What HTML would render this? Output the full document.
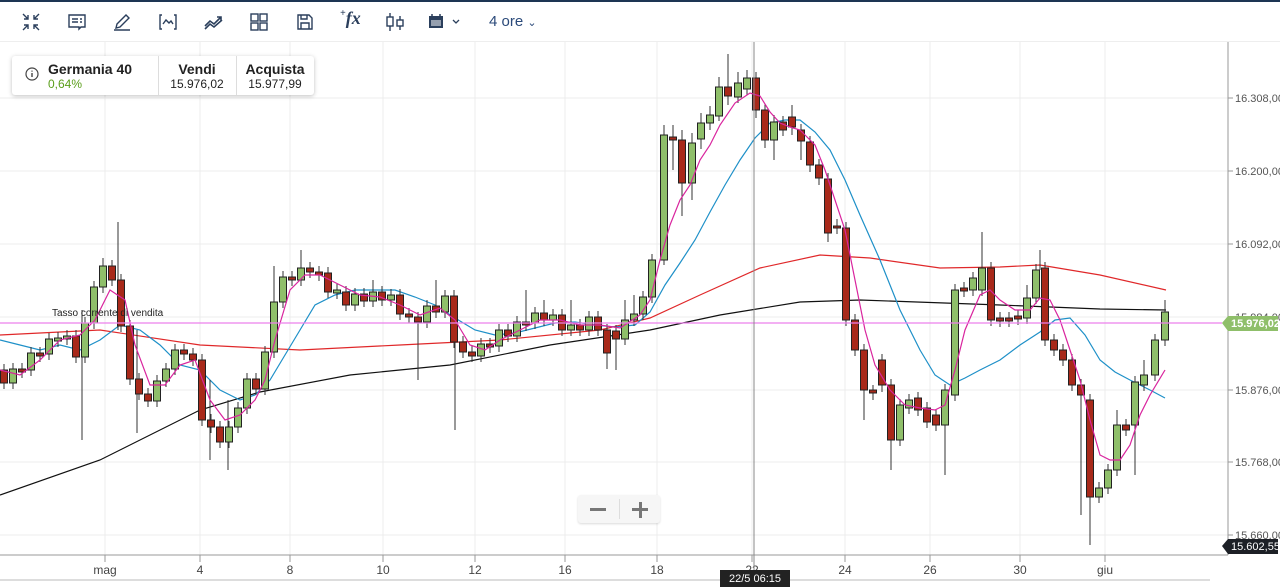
<!DOCTYPE html>
<html><head><meta charset="utf-8">
<style>
*{margin:0;padding:0;box-sizing:border-box}
body{width:1280px;height:587px;overflow:hidden;background:#fff;font-family:"Liberation Sans",sans-serif;position:relative}
#top{position:absolute;left:0;top:0;width:1280px;height:2px;background:#1d3553}
#tb{position:absolute;left:0;top:2px;width:1280px;height:40px;background:#fff;border-bottom:1px solid #eee}
.ic{position:absolute;top:10px}
#info{position:absolute;left:12px;top:56px;width:302px;height:39px;background:#fff;box-shadow:0 1px 4px rgba(0,0,0,.25);border-radius:3px;font-size:12px;color:#222}
#chart{position:absolute;left:0;top:0}
.g{stroke:#ececec;stroke-width:1}
.yl{font-size:11px;fill:#555}
.xl{font-size:12px;fill:#444;text-anchor:middle}
</style></head><body>
<svg id="chart" width="1280" height="587">
<g class="g">
<line x1="0" y1="98" x2="1228" y2="98"/><line x1="0" y1="171" x2="1228" y2="171"/><line x1="0" y1="244" x2="1228" y2="244"/><line x1="0" y1="317" x2="1228" y2="317"/><line x1="0" y1="390" x2="1228" y2="390"/><line x1="0" y1="462" x2="1228" y2="462"/><line x1="0" y1="535" x2="1228" y2="535"/>
<line x1="105" y1="42" x2="105" y2="555"/><line x1="200" y1="42" x2="200" y2="555"/><line x1="290" y1="42" x2="290" y2="555"/><line x1="383" y1="42" x2="383" y2="555"/><line x1="475" y1="42" x2="475" y2="555"/><line x1="565" y1="42" x2="565" y2="555"/><line x1="657" y1="42" x2="657" y2="555"/><line x1="752" y1="42" x2="752" y2="555"/><line x1="845" y1="42" x2="845" y2="555"/><line x1="930" y1="42" x2="930" y2="555"/><line x1="1020" y1="42" x2="1020" y2="555"/><line x1="1105" y1="42" x2="1105" y2="555"/>
</g>
<path d="M1228 42V555M0 555H1228M105 555v7M200 555v7M290 555v7M383 555v7M475 555v7M565 555v7M657 555v7M752 555v7M845 555v7M930 555v7M1020 555v7M1105 555v7M1228 98h5M1228 171h5M1228 244h5M1228 317h5M1228 390h5M1228 462h5M1228 535h5" stroke="#999" fill="none"/>
<line x1="0" y1="580" x2="1210" y2="580" stroke="#bbb"/>
<text class="xl" x="105" y="574">mag</text><text class="xl" x="200" y="574">4</text><text class="xl" x="290" y="574">8</text><text class="xl" x="383" y="574">10</text><text class="xl" x="475" y="574">12</text><text class="xl" x="565" y="574">16</text><text class="xl" x="657" y="574">18</text><text class="xl" x="752" y="574">22</text><text class="xl" x="845" y="574">24</text><text class="xl" x="930" y="574">26</text><text class="xl" x="1020" y="574">30</text><text class="xl" x="1105" y="574">giu</text>
<text class="yl" x="1235" y="102">16.308,00</text><text class="yl" x="1235" y="175">16.200,00</text><text class="yl" x="1235" y="248">16.092,00</text><text class="yl" x="1235" y="321">15.984,00</text><text class="yl" x="1235" y="394">15.876,00</text><text class="yl" x="1235" y="466">15.768,00</text><text class="yl" x="1235" y="539">15.660,00</text>

<polyline fill="none" stroke="#e0282a" stroke-width="1.2" points="0,335 100,330 200,345 300,350 400,345 500,340 600,330 650,318 700,295 760,268 820,255 870,258 940,268 1000,267 1040,265 1100,275 1166,290"/>
<polyline fill="none" stroke="#111" stroke-width="1.2" points="0,495 100,460 200,410 260,392 350,375 450,365 550,345 650,330 720,315 800,302 860,300 1000,305 1100,309 1166,310"/>
<polyline fill="none" stroke="#1e90c8" stroke-width="1.2" points="0,340 20,345 40,350 60,345 80,350 100,340 120,325 140,330 160,345 180,365 200,370 220,390 240,400 255,395 270,380 285,355 300,330 315,305 335,295 355,290 375,290 395,290 415,297 435,305 455,318 475,330 495,335 515,333 535,328 555,323 575,322 595,325 615,327 635,325 650,312 665,285 680,263 695,240 710,212 725,185 740,160 755,138 770,123 785,120 800,120 815,132 830,150 845,180 860,215 880,260 900,310 920,350 935,375 950,385 965,378 980,370 1000,360 1020,345 1040,332 1055,320 1070,318 1085,335 1100,360 1115,372 1130,380 1150,390 1165,398"/>

<path stroke="#333" stroke-width="1" fill="none" d="M4 364V389M13 363V389M22 363V378M31 347V376M40 347V362M49 333V360M58 332V347M67 330V345M76 330V363M82 310V440M85 317V363M94 281V329M103 258V293M112 260V286M118 222V330M121 274V332M130 320V385M137 330V433M139 373V400M148 388V407M157 375V407M166 363V387M175 344V375M184 344V360M193 348V366M202 354V426M210 380V460M211 414V433M220 421V448M228 400V470M229 421V448M238 402V433M247 373V414M256 373V395M265 346V395M274 266V358M283 271V308M292 271V286M301 250V286M310 262V278M319 266V281M328 267V298M337 284V299M346 286V311M355 288V311M364 288V307M373 280V307M382 286V306M391 289V306M400 289V320M409 308V323M418 312V380M427 300V328M436 280V318M445 290V318M454 290V348M455 340V430M463 336V358M472 346V362M481 338V362M490 338V353M499 324V352M508 324V342M517 316V342M526 290V331M535 307V329M544 300V326M553 309V326M562 309V336M571 300V336M580 319V336M589 311V336M598 311V336M607 324V369M616 325V370M625 300V345M634 295V326M643 291V320M652 254V303M664 125V265M673 125V170M682 130V216M692 133V200M701 113V149M710 106V130M719 77V121M728 54V105M738 72V103M747 70V95M756 72V118M765 104V148M774 115V160M783 116V136M792 105V135M801 124V160M810 136V172M819 159V185M828 173V242M837 219V234M846 222V326M855 314V356M864 344V420M873 385V400M882 354V392M891 379V470M900 399V446M909 394V414M918 392V416M927 402V428M936 409V431M945 384V475M955 284V401M964 282V297M973 272V296M982 232V296M991 262V326M1000 312V327M1009 312V327M1018 310V325M1027 285V324M1036 264V304M1040 250V270M1045 262V346M1054 334V356M1063 344V366M1072 354V391M1081 379V515M1090 394V545M1099 482V503M1108 464V494M1117 410V476M1126 419V436M1135 376V475M1144 360V391M1155 334V381M1165 300V346"/>

<path fill="#a8291a" stroke="#222" stroke-width="1" d="M0.5 370h7V383h-7zM18.5 369h7V372h-7zM36.5 353h7V356h-7zM72.5 336h7V357h-7zM108.5 266h7V280h-7zM117.5 280h7V326h-7zM126.5 326h7V379h-7zM135.5 379h7V394h-7zM144.5 394h7V401h-7zM180.5 350h7V354h-7zM189.5 354h7V360h-7zM198.5 360h7V420h-7zM207.5 420h7V427h-7zM216.5 427h7V442h-7zM252.5 379h7V389h-7zM288.5 277h7V280h-7zM306.5 268h7V272h-7zM315.5 272h7V275h-7zM324.5 273h7V292h-7zM342.5 292h7V305h-7zM360.5 294h7V301h-7zM378.5 292h7V300h-7zM396.5 295h7V314h-7zM405.5 314h7V317h-7zM414.5 317h7V322h-7zM432.5 306h7V312h-7zM450.5 296h7V342h-7zM459.5 342h7V352h-7zM468.5 352h7V356h-7zM486.5 344h7V347h-7zM504.5 330h7V336h-7zM522.5 322h7V325h-7zM540.5 313h7V320h-7zM558.5 315h7V330h-7zM576.5 325h7V330h-7zM594.5 317h7V330h-7zM603.5 330h7V353h-7zM612.5 331h7V339h-7zM669.5 137h7V140h-7zM678.5 140h7V183h-7zM724.5 87h7V96h-7zM752.5 78h7V110h-7zM761.5 110h7V140h-7zM779.5 122h7V130h-7zM788.5 117h7V127h-7zM797.5 130h7V141h-7zM806.5 142h7V165h-7zM815.5 165h7V178h-7zM824.5 179h7V233h-7zM833.5 226h7V228h-7zM842.5 228h7V320h-7zM851.5 320h7V350h-7zM860.5 350h7V390h-7zM869.5 390h7V393h-7zM878.5 360h7V385h-7zM887.5 385h7V440h-7zM914.5 398h7V410h-7zM923.5 408h7V422h-7zM932.5 415h7V425h-7zM960.5 288h7V291h-7zM987.5 268h7V320h-7zM996.5 318h7V321h-7zM1005.5 318h7V321h-7zM1014.5 316h7V319h-7zM1041.5 268h7V340h-7zM1050.5 340h7V350h-7zM1059.5 350h7V360h-7zM1068.5 360h7V385h-7zM1077.5 385h7V395h-7zM1086.5 400h7V497h-7zM1122.5 425h7V430h-7z"/>

<path fill="#8fbf6a" stroke="#222" stroke-width="1" d="M9.5 369h7V383h-7zM27.5 353h7V370h-7zM45.5 339h7V354h-7zM54.5 338h7V341h-7zM63.5 336h7V339h-7zM81.5 323h7V357h-7zM90.5 287h7V323h-7zM99.5 266h7V287h-7zM153.5 381h7V401h-7zM162.5 369h7V381h-7zM171.5 350h7V369h-7zM225.5 427h7V442h-7zM234.5 408h7V427h-7zM243.5 379h7V408h-7zM261.5 352h7V389h-7zM270.5 302h7V352h-7zM279.5 277h7V302h-7zM297.5 268h7V280h-7zM333.5 290h7V293h-7zM351.5 294h7V305h-7zM369.5 292h7V301h-7zM387.5 295h7V300h-7zM423.5 306h7V322h-7zM441.5 296h7V312h-7zM477.5 344h7V356h-7zM495.5 330h7V346h-7zM513.5 322h7V336h-7zM531.5 313h7V323h-7zM549.5 315h7V320h-7zM567.5 325h7V330h-7zM585.5 317h7V330h-7zM621.5 320h7V339h-7zM630.5 314h7V320h-7zM639.5 297h7V314h-7zM648.5 260h7V297h-7zM660.5 135h7V260h-7zM688.5 143h7V183h-7zM697.5 123h7V139h-7zM706.5 115h7V123h-7zM715.5 87h7V116h-7zM734.5 83h7V97h-7zM743.5 78h7V89h-7zM770.5 122h7V140h-7zM896.5 405h7V440h-7zM905.5 400h7V408h-7zM941.5 390h7V425h-7zM951.5 290h7V395h-7zM969.5 278h7V290h-7zM978.5 268h7V290h-7zM1023.5 298h7V318h-7zM1032.5 270h7V298h-7zM1095.5 488h7V497h-7zM1104.5 470h7V488h-7zM1113.5 425h7V470h-7zM1131.5 382h7V425h-7zM1140.5 375h7V385h-7zM1151.5 340h7V375h-7zM1161.5 312h7V340h-7z"/>

<polyline fill="none" stroke="#d9259e" stroke-width="1.2" points="0,370 20,375 40,360 60,340 80,335 95,320 110,290 125,300 135,345 150,385 165,385 180,365 195,360 210,400 225,420 240,415 255,400 265,380 275,340 290,290 305,275 320,275 340,285 360,295 380,297 400,305 420,315 440,308 455,320 470,345 485,350 500,340 520,330 540,320 560,320 580,325 600,325 620,328 640,315 650,300 660,260 670,225 680,200 690,185 700,160 710,145 720,125 735,103 750,93 760,96 770,112 780,123 790,127 800,130 815,145 825,170 835,200 845,230 855,280 865,330 875,365 890,390 905,405 920,408 935,410 945,405 955,370 965,330 980,295 990,290 1000,300 1015,310 1030,310 1040,298 1050,300 1060,320 1070,350 1080,380 1090,420 1100,455 1110,460 1120,460 1130,445 1140,415 1150,395 1165,370"/>

<line x1="0" y1="323" x2="1222" y2="323" stroke="#ec80ec" stroke-width="1.2"/>
<text x="52" y="316" style="font-size:10px;fill:#222">Tasso corrente di vendita</text>
<line x1="754" y1="42" x2="754" y2="570" stroke="#888"/>
<rect x="720" y="570" width="70" height="17" fill="#222"/>
<text x="755" y="582" style="font-size:11px;fill:#fff;text-anchor:middle">22/5 06:15</text>
<path d="M1222 323l6-7h50v15h-50z" fill="#8fbf6a"/>
<text x="1231" y="327" style="font-size:11px;fill:#fff;font-weight:bold">15.976,02</text>
<path d="M1222 546l6-7h50v15h-50z" fill="#1d2026"/>
<text x="1231" y="550" style="font-size:11px;fill:#fff">15.602,55</text>
</svg>
<div id="top"></div>
<div id="tb">
<svg class="ic" style="left:21px" width="20" height="20" viewBox="0 0 20 20" fill="none" stroke="#2b3f5c" stroke-width="1.4"><path d="M2 2l5 5M7 3v4H3M18 2l-5 5M13 3v4h4M2 18l5-5M3 13h4v4M18 18l-5-5M17 13h-4v4"/></svg>
<svg class="ic" style="left:67px" width="20" height="20" viewBox="0 0 20 20" fill="none" stroke="#2b3f5c" stroke-width="1.4"><path d="M2 3h16v12h-4l-2 2v-2H2z"/><path d="M5 7h6M5 10h6M13 7h2M13 10h2"/></svg>
<svg class="ic" style="left:112px" width="20" height="20" viewBox="0 0 20 20" fill="none" stroke="#2b3f5c" stroke-width="1.4"><path d="M4 16l1-4L14 3l3 3-9 9zM2 18h16"/></svg>
<svg class="ic" style="left:158px" width="20" height="20" viewBox="0 0 20 20" fill="none" stroke="#2b3f5c" stroke-width="1.4"><path d="M4 3H2v14h2M16 3h2v14h-2M5 12l3-4 3 3 2-2 2 3"/></svg>
<svg class="ic" style="left:203px" width="22" height="20" viewBox="0 0 22 20" fill="none" stroke="#2b3f5c" stroke-width="1.6"><path d="M2 14l5-5 4 3 7-7M14 5h4v4M2 17l5-5 4 3 8-7"/></svg>
<svg class="ic" style="left:249px" width="20" height="20" viewBox="0 0 20 20" fill="none" stroke="#2b3f5c" stroke-width="1.4"><rect x="2" y="2" width="7" height="7"/><rect x="11" y="2" width="7" height="7"/><rect x="2" y="11" width="7" height="7"/><rect x="11" y="11" width="7" height="7"/></svg>
<svg class="ic" style="left:295px" width="20" height="20" viewBox="0 0 20 20" fill="none" stroke="#2b3f5c" stroke-width="1.4"><path d="M3 3h11l3 3v11H3z M6 3v4h6V3M6 17v-6h8v6"/></svg>
<div style="position:absolute;left:340px;top:6px;font:italic bold 18px 'Liberation Serif',serif;color:#2b3f5c"><span style="font-size:10px;vertical-align:top">+</span>fx</div>
<svg class="ic" style="left:384px" width="24" height="20" viewBox="0 0 24 20" fill="none" stroke="#2b3f5c" stroke-width="1.4"><path d="M6 1v18M16 4v14"/><rect x="3" y="5" width="6" height="9" fill="#fff"/><rect x="13" y="8" width="6" height="6" fill="#fff"/></svg>
<svg class="ic" style="left:429px" width="34" height="20" viewBox="0 0 34 20"><rect x="0" y="4" width="14" height="12" fill="#2b3f5c"/><rect x="2" y="8" width="10" height="6" fill="#fff" opacity=".5"/><path d="M3 2v3M11 2v3" stroke="#2b3f5c" stroke-width="1.5"/><path d="M24 8l3 3 3-3" stroke="#2b3f5c" fill="none" stroke-width="1.3"/></svg>
<div style="position:absolute;left:489px;top:11px;font-size:15px;color:#2b4a7a">4 ore <span style="font-size:11px">&#8964;</span></div>
</div>
<div id="info">
<svg style="position:absolute;left:13px;top:11px" width="14" height="14" viewBox="0 0 14 14"><circle cx="7" cy="7" r="6" fill="none" stroke="#444" stroke-width="1.2"/><path d="M7 6v4M7 3.6v1" stroke="#444" stroke-width="1.4"/></svg>
<div style="position:absolute;left:36px;top:5px;font-weight:bold;font-size:14px">Germania 40</div>
<div style="position:absolute;left:36px;top:21px;color:#5a9e1a">0,64%</div>
<div style="position:absolute;left:146px;top:0;width:1px;height:39px;background:#ddd"></div>
<div style="position:absolute;left:146px;width:78px;top:5px;text-align:center;font-weight:bold;font-size:14px">Vendi</div>
<div style="position:absolute;left:146px;width:78px;top:21px;text-align:center">15.976,02</div>
<div style="position:absolute;left:224px;top:0;width:1px;height:39px;background:#ddd"></div>
<div style="position:absolute;left:224px;width:78px;top:5px;text-align:center;font-weight:bold;font-size:14px">Acquista</div>
<div style="position:absolute;left:224px;width:78px;top:21px;text-align:center">15.977,99</div>
</div>
<div style="position:absolute;left:578px;top:495px;width:82px;height:28px;background:#f6f6f6;border-radius:3px;box-shadow:0 1px 2px rgba(0,0,0,.15)">
<div style="position:absolute;left:12px;top:13px;width:16px;height:3px;background:#777"></div>
<div style="position:absolute;left:41px;top:4px;width:1px;height:20px;background:#ddd"></div>
<div style="position:absolute;left:54px;top:13px;width:16px;height:3px;background:#777"></div>
<div style="position:absolute;left:60.5px;top:7px;width:3px;height:16px;background:#777"></div>
</div>
</body></html>
